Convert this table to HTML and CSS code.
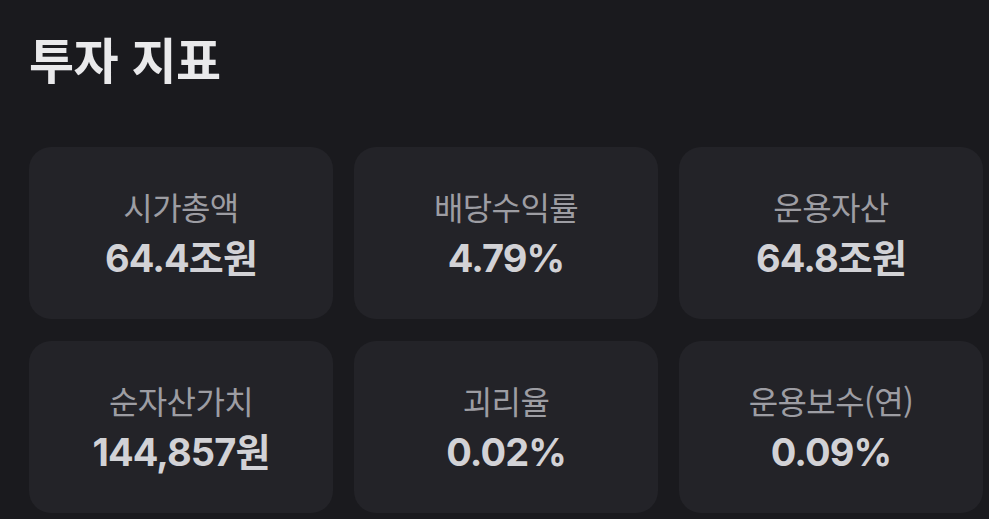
FILE: index.html
```html
<!DOCTYPE html>
<html lang="ko">
<head>
<meta charset="utf-8">
<link rel="stylesheet" href="styles.css">
</head>
<body>
<main class="page">
  <h1 class="title">투자 지표</h1>
  <section class="grid">
    <div class="card"><div class="label">시가총액</div><div class="value">64.4조원</div></div>
    <div class="card"><div class="label">배당수익률</div><div class="value">4.79%</div></div>
    <div class="card"><div class="label">운용자산</div><div class="value">64.8조원</div></div>
    <div class="card"><div class="label">순자산가치</div><div class="value">144,857원</div></div>
    <div class="card"><div class="label">괴리율</div><div class="value">0.02%</div></div>
    <div class="card"><div class="label">운용보수(연)</div><div class="value">0.09%</div></div>
  </section>
</main>
</body>
</html>
```
FILE: styles.css
```css
html, body {
  margin: 0;
  padding: 0;
  background: #1a1a1e;
  overflow: hidden;
}
.page {
  padding: 25px 0 0 29px;
  font-family: "Noto Sans CJK KR", sans-serif;
}
.title {
  margin: 0;
  font-size: 49px;
  line-height: 66px;
  font-weight: 700;
  color: #e9e9eb;
  letter-spacing: -0.5px;
}
.grid {
  margin-top: 56px;
  display: grid;
  grid-template-columns: repeat(3, 304px);
  grid-auto-rows: 172px;
  column-gap: 21px;
  row-gap: 22px;
}
.card {
  background: #232328;
  border-radius: 22px;
  display: flex;
  flex-direction: column;
  align-items: center;
  justify-content: center;
  gap: 9px;
}
.label {
  font-size: 32px;
  line-height: 40px;
  color: #9d9da3;
  font-weight: 400;
  letter-spacing: -0.6px;
}
.value {
  font-family: Inter, "Noto Sans CJK KR", sans-serif;
  font-size: 38px;
  line-height: 46px;
  font-weight: 700;
  color: #d2d2d6;
  letter-spacing: -0.9px;
}
```
